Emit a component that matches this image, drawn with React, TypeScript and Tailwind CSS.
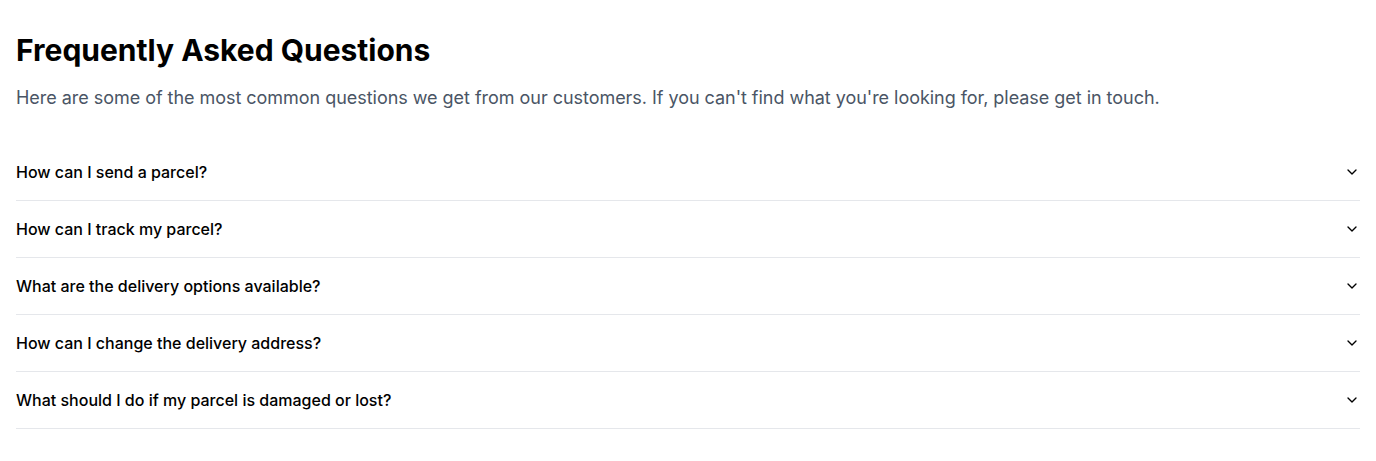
import { useState } from 'react';
import { ChevronDown } from 'lucide-react';

const questions = [
  {
    q: 'How can I send a parcel?',
    a: 'Create a shipment online, print the label and drop the parcel at any of our service points.',
  },
  {
    q: 'How can I track my parcel?',
    a: 'Enter your tracking number on our tracking page to see the latest status of your parcel.',
  },
  {
    q: 'What are the delivery options available?',
    a: 'We offer standard, express and same-day delivery depending on your location.',
  },
  {
    q: 'How can I change the delivery address?',
    a: 'You can change the delivery address from the tracking page before the parcel is out for delivery.',
  },
  {
    q: 'What should I do if my parcel is damaged or lost?',
    a: 'Please contact our support team with your tracking number and we will open a claim for you.',
  },
];

export default function App() {
  const [open, setOpen] = useState<number | null>(null);

  return (
    <div
      className="min-h-screen bg-white px-4 pt-8 text-black"
      style={{ fontFamily: 'Inter, "Noto Sans", sans-serif' }}
    >
      <h1 className="text-3xl font-bold">Frequently Asked Questions</h1>
      <p className="mt-4 text-lg tracking-[-0.002em] text-gray-600">
        Here are some of the most common questions we get from our customers. If you can't find what you're
        looking for, please get in touch.
      </p>

      <div className="mt-8 w-full">
        {questions.map((item, i) => (
          <div key={item.q} className="border-b border-gray-200">
            <button
              onClick={() => setOpen(open === i ? null : i)}
              className="flex w-full items-center justify-between py-4 text-left text-base font-medium"
            >
              {item.q}
              <ChevronDown
                className={`h-4 w-4 shrink-0 transition-transform ${open === i ? 'rotate-180' : ''}`}
              />
            </button>
            {open === i && <div className="pb-4 text-sm text-gray-600">{item.a}</div>}
          </div>
        ))}
      </div>
    </div>
  );
}
